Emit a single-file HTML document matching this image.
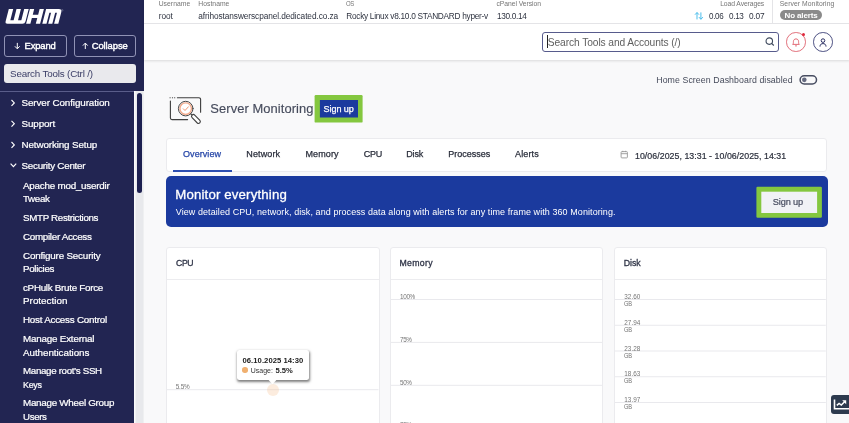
<!DOCTYPE html>
<html>
<head>
<meta charset="utf-8">
<title>WHM - Server Monitoring</title>
<style>
*{box-sizing:border-box;margin:0;padding:0}
html,body{width:849px;height:423px;overflow:hidden;background:#f9f9fa;font-family:"Liberation Sans",sans-serif}
.a{position:absolute}
.t{position:absolute;white-space:nowrap;font-family:"Liberation Sans",sans-serif}
.card{position:absolute;background:#fff;border:1px solid #ebebee;border-radius:3px}
.gl{position:absolute;height:1px;background:#ececef}
svg{position:absolute;overflow:visible}
</style>
</head>
<body>
<div id="w" style="position:absolute;left:0;top:0;width:849px;height:423px;overflow:hidden;will-change:transform">
<!-- SIDEBAR -->
<div class="a" style="left:0;top:0;width:143.7px;height:91px;background:#222552"></div>
<div class="a" style="left:0;top:90.5px;width:134px;height:333px;background:#222552"></div>
<div class="a" style="left:134px;top:91px;width:2px;height:333px;background:#fafafb"></div>
<svg style="left:0;top:0" width="150" height="423" viewBox="0 0 150 423"><rect x="135.5" y="91" width="8.1" height="332" fill="#e8e9ec"/></svg>
<div class="a" style="left:137px;top:93px;width:5px;height:100px;background:#1d2050;border-radius:2.5px"></div>
<div class="a" style="left:0;top:91px;width:134px;height:1px;background:#5a5d8a"></div>
<!-- logo -->
<svg style="left:0;top:0" width="70" height="30" viewBox="0 0 70 30">
 <g transform="translate(5,23.8) skewX(-14.5)" fill="#fff">
  <path d="M0,-14.7 h4.4 v11.1 h3.3 v-11.1 h4.4 v11.1 h3.3 v-11.1 h4.5 v12.2 a2.5,2.5 0 0 1 -2.5,2.5 h-14.9 a2.5,2.5 0 0 1 -2.5,-2.5 z"/>
  <path d="M21.1,-14.7 h4.3 v5.6 h5.4 v-5.6 h4.3 v14.7 h-4.3 v-5.7 h-5.4 v5.7 h-4.3 z"/>
  <path d="M37.3,-14.7 h12.6 a3.4,3.4 0 0 1 3.4,3.4 v11.3 h-4.2 v-11.1 h-1.8 v11.1 h-4.1 v-11.1 h-1.7 v11.1 h-4.2 z"/>
 </g>
 <circle cx="62.2" cy="10.3" r=".8" fill="none" stroke="#fff" stroke-width=".4" opacity=".6"/>
</svg>
<!-- buttons -->
<div class="a" style="left:4.2px;top:35.2px;width:62.6px;height:21.4px;border:1px solid #9092b5;border-radius:3px"></div>
<div class="a" style="left:74px;top:35.2px;width:62.3px;height:21.4px;border:1px solid #9092b5;border-radius:3px"></div>
<svg style="left:14px;top:42px" width="8" height="8" viewBox="0 0 8 8"><path d="M3.3,0.9 V6.6 M0.9,4.3 L3.3,6.8 L5.7,4.3" fill="none" stroke="#fff" stroke-width="1"/></svg>
<svg style="left:81.5px;top:42px" width="8" height="8" viewBox="0 0 8 8"><path d="M3.3,7 V1.2 M0.9,3.6 L3.3,1.1 L5.7,3.6" fill="none" stroke="#fff" stroke-width="1"/></svg>
<div class="a" style="left:4.2px;top:64px;width:132.1px;height:19.4px;background:#e9e9ed;border-radius:3px"></div>
<!-- chevrons -->
<svg style="left:0;top:0" width="30" height="200" viewBox="0 0 30 200" fill="none" stroke="#fff" stroke-width="1.15">
 <path d="M11.5,100 L14.3,102.9 L11.5,105.8"/>
 <path d="M11.5,120.8 L14.3,123.7 L11.5,126.6"/>
 <path d="M11.5,142 L14.3,144.9 L11.5,147.8"/>
 <path d="M10.6,163.6 L13.4,166.6 L16.2,163.6"/>
</svg>

<!-- TOP BARS -->
<div class="a" style="left:143.7px;top:0;width:706px;height:60.3px;background:#fff;box-shadow:0 1px 2.5px rgba(0,0,0,.13)"></div>
<div class="a" style="left:143.7px;top:22.6px;width:706px;height:1px;background:#e4e4e7"></div>
<div class="a" style="left:771.8px;top:0;width:1px;height:23px;background:#e4e4e7"></div>
<!-- load arrows -->
<svg style="left:694px;top:11px" width="10" height="10" viewBox="0 0 10 10" fill="none" stroke="#45bbea" stroke-width=".95">
 <path d="M3,8.4 V1.6 M1,3.7 L3,1.5 L5,3.7"/><path d="M6.9,1.4 V8.2 M4.9,6.1 L6.9,8.3 L8.9,6.1"/>
</svg>
<div class="a" style="left:779.7px;top:10px;width:42.4px;height:10.2px;background:#8a8a8a;border-radius:5.1px"></div>
<!-- search -->
<div class="a" style="left:541.6px;top:31.9px;width:237.4px;height:19.8px;background:#fff;border:1px solid #575b8c;border-radius:3px"></div>
<div class="a" style="left:547.3px;top:35.4px;width:.9px;height:12.8px;background:#222"></div>
<svg style="left:763.5px;top:36px" width="12" height="12" viewBox="0 0 12 12" fill="none" stroke="#3f4a5e" stroke-width="1.1"><circle cx="5.3" cy="5.1" r="3.25"/><path d="M7.7,7.5 L9.8,9.5"/></svg>
<!-- bell -->
<div class="a" style="left:786px;top:32px;width:19.6px;height:19.6px;border:1px solid #e2707b;border-radius:50%"></div>
<svg style="left:790.8px;top:36.6px" width="10" height="11" viewBox="0 0 10 11" fill="none" stroke="#df5a66" stroke-width=".9"><path d="M1.7,7.4 C2.5,6.6 2.4,5.8 2.4,4.6 C2.4,3 3.5,1.9 5,1.9 C6.5,1.9 7.6,3 7.6,4.6 C7.6,5.8 7.5,6.6 8.3,7.4 Z"/><path d="M4.1,8.7 Q5,9.5 5.9,8.7"/></svg>
<div class="a" style="left:801.6px;top:32.6px;width:3.4px;height:3.4px;border-radius:50%;background:#e0283c"></div>
<!-- user -->
<div class="a" style="left:813px;top:32px;width:19.6px;height:19.6px;border:1px solid #4d5183;border-radius:50%"></div>
<svg style="left:817.9px;top:36.5px" width="10" height="11" viewBox="0 0 10 11" fill="none" stroke="#2a2e62" stroke-width="1"><circle cx="5" cy="3.6" r="1.8"/><path d="M2,9.6 C2,7.4 3.4,6.6 5,6.6 C6.6,6.6 8,7.4 8,9.6"/></svg>

<!-- toggle -->
<svg style="left:0;top:0" width="849" height="100" viewBox="0 0 849 100"><rect x="800.1" y="75.7" width="16.4" height="8.3" rx="4.15" fill="none" stroke="#484d61" stroke-width="1.5"/><circle cx="804.3" cy="79.85" r="2.3" fill="#656a80"/></svg>

<!-- heading icon -->
<svg style="left:164px;top:92px" width="44" height="36" viewBox="0 0 44 36" fill="none" stroke="#3f3f3f" stroke-width="1.12" stroke-linecap="round">
 <path d="M13.4,5.8 H35 a1.6,1.6 0 0 1 1.6,1.6 V20.3"/>
 <path d="M6.4,9 V26 a1.6,1.6 0 0 0 1.6,1.6 H23.6"/>
 <path d="M6,5.8 h.2 M8.4,5.8 h.2 M10.6,5.8 h.2" stroke-width="1.1"/>
 <circle cx="21.7" cy="16.6" r="5.75" stroke="#f4a98a" stroke-width="1.35" fill="#fff"/>
 <circle cx="21.7" cy="16.6" r="7.3" stroke="#474747" stroke-width="1"/>
 <path d="M19.3,16.8 L21,18.5 L24.4,14.8" stroke="#f09470" stroke-width="1"/>
 <path d="M26.8,21.9 L28.6,23.8" />
 <path d="M28.1,23.1 a1.85,1.85 0 0 1 2.6,0 L35.9,28.4 a1.85,1.85 0 0 1 -2.6,2.6 L28.1,25.7 a1.85,1.85 0 0 1 0,-2.6 z" fill="#fff"/>
</svg>
<!-- heading sign up -->
<svg style="left:0;top:0" width="849" height="130" viewBox="0 0 849 130"><rect x="314.6" y="95" width="48" height="27.6" rx="1.2" fill="#84c73f"/><rect x="319.9" y="100" width="38.1" height="17.5" fill="#1b3a9e"/></svg>

<!-- tabs card -->
<div class="card" style="left:166px;top:138px;width:661px;height:34px"></div>
<div class="a" style="left:173px;top:170px;width:59px;height:2px;background:#2d4eb0"></div>
<svg style="left:620px;top:150.4px" width="9" height="9" viewBox="0 0 9 9" fill="none" stroke="#999" stroke-width=".9"><rect x="1.1" y="1.6" width="6.3" height="6.3" rx=".8"/><path d="M1.1,3.7 H7.4 M2.8,0.8 V2.1 M5.7,0.8 V2.1"/></svg>

<!-- banner -->
<div class="a" style="left:165.5px;top:176.2px;width:662px;height:51.1px;background:#1b3a9e;border-radius:5px"></div>
<svg style="left:0;top:0" width="849" height="230" viewBox="0 0 849 230"><rect x="756.4" y="186.8" width="65.5" height="31" rx="1.2" fill="#84c73f"/><rect x="761.3" y="191.7" width="55.8" height="21.3" fill="#f1f2f6"/></svg>

<!-- chart cards -->
<div class="card" style="left:165.8px;top:247px;width:214px;height:190px"></div>
<div class="card" style="left:389.9px;top:247px;width:213.6px;height:190px"></div>
<div class="card" style="left:613.6px;top:247px;width:213.6px;height:190px"></div>
<div class="gl" style="left:166.8px;top:278.8px;width:212px"></div>
<div class="gl" style="left:390.9px;top:278.8px;width:211.6px"></div>
<div class="gl" style="left:614.6px;top:278.8px;width:211.6px"></div>
<!-- grid -->
<svg style="left:0;top:0" width="849" height="423" viewBox="0 0 849 423" fill="#e9e9ed"><rect x="167" y="389.20" width="211.5" height="1"/><rect x="391" y="299.00" width="211" height="1"/><rect x="391" y="341.90" width="211" height="1"/><rect x="391" y="384.80" width="211" height="1"/><rect x="615" y="299.00" width="210.8" height="1"/><rect x="615" y="324.75" width="210.8" height="1"/><rect x="615" y="350.50" width="210.8" height="1"/><rect x="615" y="376.25" width="210.8" height="1"/><rect x="615" y="402.00" width="210.8" height="1"/></svg>
<!-- hover dot + tooltip -->
<div class="a" style="left:266.8px;top:383.8px;width:12px;height:12px;border-radius:50%;background:rgba(246,190,140,.29)"></div>
<div class="a" style="left:237px;top:350px;width:72px;height:30.4px;background:#fff;border-radius:2.5px;box-shadow:.8px 1.3px 2.6px rgba(0,0,0,.5)"></div>
<svg style="left:268px;top:379.6px" width="10" height="6" viewBox="0 0 10 6"><path d="M0.6,0 L4.5,4.2 L8.4,0 Z" fill="#fff"/></svg>
<div class="a" style="left:242.3px;top:367.3px;width:5.5px;height:5.5px;border-radius:50%;background:#f0b070"></div>

<!-- TEXT -->
<div class="t" style="left:24.50px;top:40px;font-size:9.44px;line-height:11px;font-weight:400;color:#fff;letter-spacing:-0.143px;-webkit-text-stroke:.4px #fff;">Expand</div>
<div class="t" style="left:91.75px;top:40px;font-size:9.44px;line-height:11px;font-weight:400;color:#fff;letter-spacing:-0.096px;-webkit-text-stroke:.4px #fff;">Collapse</div>
<div class="t" style="left:10.00px;top:68px;font-size:9.83px;line-height:11px;font-weight:400;color:#3a3d66;letter-spacing:-0.178px;">Search Tools (Ctrl /)</div>
<div class="t" style="left:21.50px;top:97px;font-size:9.83px;line-height:11px;font-weight:400;color:#fff;letter-spacing:-0.101px;-webkit-text-stroke:.22px #fff;">Server Configuration</div>
<div class="t" style="left:21.50px;top:118px;font-size:9.83px;line-height:11px;font-weight:400;color:#fff;letter-spacing:-0.115px;-webkit-text-stroke:.22px #fff;">Support</div>
<div class="t" style="left:21.50px;top:139px;font-size:9.83px;line-height:11px;font-weight:400;color:#fff;letter-spacing:-0.124px;-webkit-text-stroke:.22px #fff;">Networking Setup</div>
<div class="t" style="left:21.50px;top:160px;font-size:9.83px;line-height:11px;font-weight:400;color:#fff;letter-spacing:-0.265px;-webkit-text-stroke:.22px #fff;">Security Center</div>
<div class="t" style="left:23.00px;top:180px;font-size:9.83px;line-height:11px;font-weight:400;color:#fff;letter-spacing:-0.230px;-webkit-text-stroke:.22px #fff;">Apache mod_userdir</div>
<div class="t" style="left:23.00px;top:193px;font-size:9.83px;line-height:11px;font-weight:400;color:#fff;letter-spacing:-0.330px;transform:scaleX(0.9937);transform-origin:0 0;-webkit-text-stroke:.22px #fff;">Tweak</div>
<div class="t" style="left:23.00px;top:212px;font-size:9.83px;line-height:11px;font-weight:400;color:#fff;letter-spacing:-0.330px;transform:scaleX(0.9944);transform-origin:0 0;-webkit-text-stroke:.22px #fff;">SMTP Restrictions</div>
<div class="t" style="left:23.00px;top:231px;font-size:9.83px;line-height:11px;font-weight:400;color:#fff;letter-spacing:-0.308px;-webkit-text-stroke:.22px #fff;">Compiler Access</div>
<div class="t" style="left:23.00px;top:250px;font-size:9.83px;line-height:11px;font-weight:400;color:#fff;letter-spacing:-0.187px;-webkit-text-stroke:.22px #fff;">Configure Security</div>
<div class="t" style="left:23.00px;top:263px;font-size:9.83px;line-height:11px;font-weight:400;color:#fff;letter-spacing:-0.330px;transform:scaleX(0.9955);transform-origin:0 0;-webkit-text-stroke:.22px #fff;">Policies</div>
<div class="t" style="left:23.00px;top:282px;font-size:9.83px;line-height:11px;font-weight:400;color:#fff;letter-spacing:-0.293px;-webkit-text-stroke:.22px #fff;">cPHulk Brute Force</div>
<div class="t" style="left:23.00px;top:295px;font-size:9.83px;line-height:11px;font-weight:400;color:#fff;letter-spacing:0.024px;-webkit-text-stroke:.22px #fff;">Protection</div>
<div class="t" style="left:23.00px;top:314px;font-size:9.83px;line-height:11px;font-weight:400;color:#fff;letter-spacing:-0.241px;-webkit-text-stroke:.22px #fff;">Host Access Control</div>
<div class="t" style="left:23.00px;top:333px;font-size:9.83px;line-height:11px;font-weight:400;color:#fff;letter-spacing:-0.205px;-webkit-text-stroke:.22px #fff;">Manage External</div>
<div class="t" style="left:23.00px;top:347px;font-size:9.83px;line-height:11px;font-weight:400;color:#fff;letter-spacing:-0.056px;-webkit-text-stroke:.22px #fff;">Authentications</div>
<div class="t" style="left:23.00px;top:365px;font-size:9.83px;line-height:11px;font-weight:400;color:#fff;letter-spacing:-0.330px;transform:scaleX(0.9917);transform-origin:0 0;-webkit-text-stroke:.22px #fff;">Manage root’s SSH</div>
<div class="t" style="left:23.00px;top:379px;font-size:9.83px;line-height:11px;font-weight:400;color:#fff;letter-spacing:-0.330px;transform:scaleX(0.9071);transform-origin:0 0;-webkit-text-stroke:.22px #fff;">Keys</div>
<div class="t" style="left:23.00px;top:397px;font-size:9.83px;line-height:11px;font-weight:400;color:#fff;letter-spacing:-0.276px;-webkit-text-stroke:.22px #fff;">Manage Wheel Group</div>
<div class="t" style="left:23.00px;top:411px;font-size:9.83px;line-height:11px;font-weight:400;color:#fff;letter-spacing:-0.330px;transform:scaleX(0.9824);transform-origin:0 0;-webkit-text-stroke:.22px #fff;">Users</div>
<div class="t" style="left:158.70px;top:0px;font-size:6.78px;line-height:7px;font-weight:400;color:#757575;letter-spacing:0.051px;">Username</div>
<div class="t" style="left:158.70px;top:11px;font-size:8.3px;line-height:10px;font-weight:400;color:#2e3340;letter-spacing:-0.064px;">root</div>
<div class="t" style="left:198.30px;top:0px;font-size:6.78px;line-height:7px;font-weight:400;color:#757575;letter-spacing:0.033px;">Hostname</div>
<div class="t" style="left:198.30px;top:11px;font-size:8.3px;line-height:10px;font-weight:400;color:#2e3340;letter-spacing:-0.088px;">afrihostanswerscpanel.dedicated.co.za</div>
<div class="t" style="left:346.25px;top:0px;font-size:6.78px;line-height:7px;font-weight:400;color:#757575;letter-spacing:-0.330px;transform:scaleX(0.8809);transform-origin:0 0;">OS</div>
<div class="t" style="left:346.25px;top:11px;font-size:8.3px;line-height:10px;font-weight:400;color:#2e3340;letter-spacing:-0.289px;">Rocky Linux v8.10.0 STANDARD hyper-v</div>
<div class="t" style="left:496.50px;top:0px;font-size:6.78px;line-height:7px;font-weight:400;color:#757575;letter-spacing:-0.048px;">cPanel Version</div>
<div class="t" style="left:496.50px;top:11px;font-size:8.3px;line-height:10px;font-weight:400;color:#2e3340;letter-spacing:-0.330px;transform:scaleX(0.9960);transform-origin:0 0;">130.0.14</div>
<div class="t" style="left:720.20px;top:0px;font-size:6.78px;line-height:7px;font-weight:400;color:#757575;letter-spacing:-0.084px;">Load Averages</div>
<div class="t" style="left:708.75px;top:11px;font-size:8.3px;line-height:10px;font-weight:400;color:#2e3340;letter-spacing:-0.330px;transform:scaleX(0.9650);transform-origin:0 0;">0.06</div>
<div class="t" style="left:728.75px;top:11px;font-size:8.3px;line-height:10px;font-weight:400;color:#2e3340;letter-spacing:-0.330px;transform:scaleX(0.9811);transform-origin:0 0;">0.13</div>
<div class="t" style="left:749.00px;top:11px;font-size:8.3px;line-height:10px;font-weight:400;color:#2e3340;letter-spacing:-0.178px;">0.07</div>
<div class="t" style="left:779.75px;top:0px;font-size:6.78px;line-height:7px;font-weight:400;color:#757575;letter-spacing:0.070px;">Server Monitoring</div>
<div class="t" style="left:784.60px;top:11px;font-size:8.0px;line-height:9px;font-weight:700;color:#fff;letter-spacing:-0.148px;">No alerts</div>
<div class="t" style="left:547.80px;top:37px;font-size:10.25px;line-height:11px;font-weight:400;color:#5f5f5f;letter-spacing:-0.108px;">Search Tools and Accounts (/)</div>
<div class="t" style="left:656.25px;top:75px;font-size:8.77px;line-height:10px;font-weight:400;color:#454a5a;letter-spacing:0.082px;">Home Screen Dashboard disabled</div>
<div class="t" style="left:210.30px;top:101px;font-size:12.93px;line-height:15px;font-weight:400;color:#464b5c;letter-spacing:0.075px;-webkit-text-stroke:.15px #464b5c;">Server Monitoring</div>
<div class="t" style="left:323.50px;top:104px;font-size:9.03px;line-height:10px;font-weight:400;color:#fff;letter-spacing:-0.044px;-webkit-text-stroke:.25px #fff;">Sign up</div>
<div class="t" style="left:183.00px;top:149px;font-size:9.03px;line-height:10px;font-weight:400;color:#2747a8;letter-spacing:0.063px;-webkit-text-stroke:.25px #2747a8;">Overview</div>
<div class="t" style="left:246.25px;top:149px;font-size:9.03px;line-height:10px;font-weight:400;color:#2b2f3c;letter-spacing:0.116px;-webkit-text-stroke:.25px #2b2f3c;">Network</div>
<div class="t" style="left:305.50px;top:149px;font-size:9.03px;line-height:10px;font-weight:400;color:#2b2f3c;letter-spacing:0.090px;-webkit-text-stroke:.25px #2b2f3c;">Memory</div>
<div class="t" style="left:363.75px;top:149px;font-size:9.03px;line-height:10px;font-weight:400;color:#2b2f3c;letter-spacing:-0.262px;-webkit-text-stroke:.25px #2b2f3c;">CPU</div>
<div class="t" style="left:406.25px;top:149px;font-size:9.03px;line-height:10px;font-weight:400;color:#2b2f3c;letter-spacing:-0.174px;-webkit-text-stroke:.25px #2b2f3c;">Disk</div>
<div class="t" style="left:448.25px;top:149px;font-size:9.03px;line-height:10px;font-weight:400;color:#2b2f3c;letter-spacing:-0.010px;-webkit-text-stroke:.25px #2b2f3c;">Processes</div>
<div class="t" style="left:515.00px;top:149px;font-size:9.03px;line-height:10px;font-weight:400;color:#2b2f3c;letter-spacing:0.142px;-webkit-text-stroke:.25px #2b2f3c;">Alerts</div>
<div class="t" style="left:635.00px;top:151px;font-size:8.81px;line-height:10px;font-weight:400;color:#2b2f3c;letter-spacing:0.041px;-webkit-text-stroke:.2px #2b2f3c;">10/06/2025, 13:31 - 10/06/2025, 14:31</div>
<div class="t" style="left:175.30px;top:187px;font-size:13.22px;line-height:15px;font-weight:400;color:#fff;letter-spacing:0.160px;-webkit-text-stroke:.3px #fff;">Monitor everything</div>
<div class="t" style="left:175.75px;top:207px;font-size:8.98px;line-height:10px;font-weight:400;color:#fff;letter-spacing:0.086px;">View detailed CPU, network, disk, and process data along with alerts for any time frame with 360 Monitoring.</div>
<div class="t" style="left:772.70px;top:197px;font-size:9.21px;line-height:10px;font-weight:400;color:#454a5e;letter-spacing:-0.116px;-webkit-text-stroke:.2px #454a5e;">Sign up</div>
<div class="t" style="left:175.75px;top:258px;font-size:8.74px;line-height:10px;font-weight:400;color:#2f3447;letter-spacing:-0.330px;transform:scaleX(0.9872);transform-origin:0 0;-webkit-text-stroke:.3px #2f3447;">CPU</div>
<div class="t" style="left:399.50px;top:258px;font-size:8.74px;line-height:10px;font-weight:400;color:#2f3447;letter-spacing:0.315px;-webkit-text-stroke:.3px #2f3447;">Memory</div>
<div class="t" style="left:623.75px;top:258px;font-size:8.74px;line-height:10px;font-weight:400;color:#2f3447;letter-spacing:-0.038px;-webkit-text-stroke:.3px #2f3447;">Disk</div>
<div class="t" style="left:175.75px;top:383px;font-size:6.38px;line-height:7px;font-weight:400;color:#747474;letter-spacing:-0.204px;">5.5%</div>
<div class="t" style="left:400.40px;top:293px;font-size:6.38px;line-height:7px;font-weight:400;color:#747474;letter-spacing:-0.330px;transform:scaleX(0.9970);transform-origin:0 0;">100%</div>
<div class="t" style="left:400.40px;top:336px;font-size:6.38px;line-height:7px;font-weight:400;color:#747474;letter-spacing:-0.330px;transform:scaleX(0.9895);transform-origin:0 0;">75%</div>
<div class="t" style="left:400.40px;top:379px;font-size:6.38px;line-height:7px;font-weight:400;color:#747474;letter-spacing:-0.330px;transform:scaleX(0.9895);transform-origin:0 0;">50%</div>
<div class="t" style="left:400.40px;top:421px;font-size:6.38px;line-height:7px;font-weight:400;color:#747474;letter-spacing:-0.330px;transform:scaleX(0.9895);transform-origin:0 0;">25%</div>
<div class="t" style="left:624.25px;top:293px;font-size:6.38px;line-height:7px;font-weight:400;color:#747474;letter-spacing:0.023px;">32.60</div>
<div class="t" style="left:624.25px;top:300px;font-size:6.38px;line-height:7px;font-weight:400;color:#747474;letter-spacing:-0.330px;transform:scaleX(0.8982);transform-origin:0 0;">GB</div>
<div class="t" style="left:624.25px;top:319px;font-size:6.38px;line-height:7px;font-weight:400;color:#747474;letter-spacing:0.023px;">27.94</div>
<div class="t" style="left:624.25px;top:326px;font-size:6.38px;line-height:7px;font-weight:400;color:#747474;letter-spacing:-0.330px;transform:scaleX(0.8982);transform-origin:0 0;">GB</div>
<div class="t" style="left:624.25px;top:345px;font-size:6.38px;line-height:7px;font-weight:400;color:#747474;letter-spacing:0.023px;">23.28</div>
<div class="t" style="left:624.25px;top:352px;font-size:6.38px;line-height:7px;font-weight:400;color:#747474;letter-spacing:-0.330px;transform:scaleX(0.8982);transform-origin:0 0;">GB</div>
<div class="t" style="left:624.25px;top:370px;font-size:6.38px;line-height:7px;font-weight:400;color:#747474;letter-spacing:0.023px;">18.63</div>
<div class="t" style="left:624.25px;top:377px;font-size:6.38px;line-height:7px;font-weight:400;color:#747474;letter-spacing:-0.330px;transform:scaleX(0.8982);transform-origin:0 0;">GB</div>
<div class="t" style="left:624.25px;top:396px;font-size:6.38px;line-height:7px;font-weight:400;color:#747474;letter-spacing:0.023px;">13.97</div>
<div class="t" style="left:624.25px;top:403px;font-size:6.38px;line-height:7px;font-weight:400;color:#747474;letter-spacing:-0.330px;transform:scaleX(0.8982);transform-origin:0 0;">GB</div>
<div class="t" style="left:242.50px;top:356px;font-size:7.65px;line-height:9px;font-weight:700;color:#222;letter-spacing:0.056px;">06.10.2025 14:30</div>
<div class="t" style="left:250.75px;top:367px;font-size:6.98px;line-height:7px;font-weight:400;color:#333;letter-spacing:0.021px;">Usage:</div>
<div class="t" style="left:275.50px;top:366px;font-size:7.6px;line-height:9px;font-weight:700;color:#222;letter-spacing:-0.019px;">5.5%</div>
<!-- floating button -->
<div class="a" style="left:831.4px;top:395px;width:22px;height:18.6px;background:#2d3a4e;border-radius:3px 0 0 3px"></div>
<svg style="left:833px;top:397.5px" width="16" height="13" viewBox="0 0 16 13" fill="none" stroke="#fff" stroke-width="1.6"><path d="M1.5,1.4 V10.8 H16"/><path d="M3.8,7.4 L6.1,5.4 L8.3,7 L11.6,3.8" stroke-width="1.5"/><path d="M9.2,2.2 H13.2 V6.2 Z" fill="#fff" stroke="none"/></svg>

</div>
</body>
</html>
